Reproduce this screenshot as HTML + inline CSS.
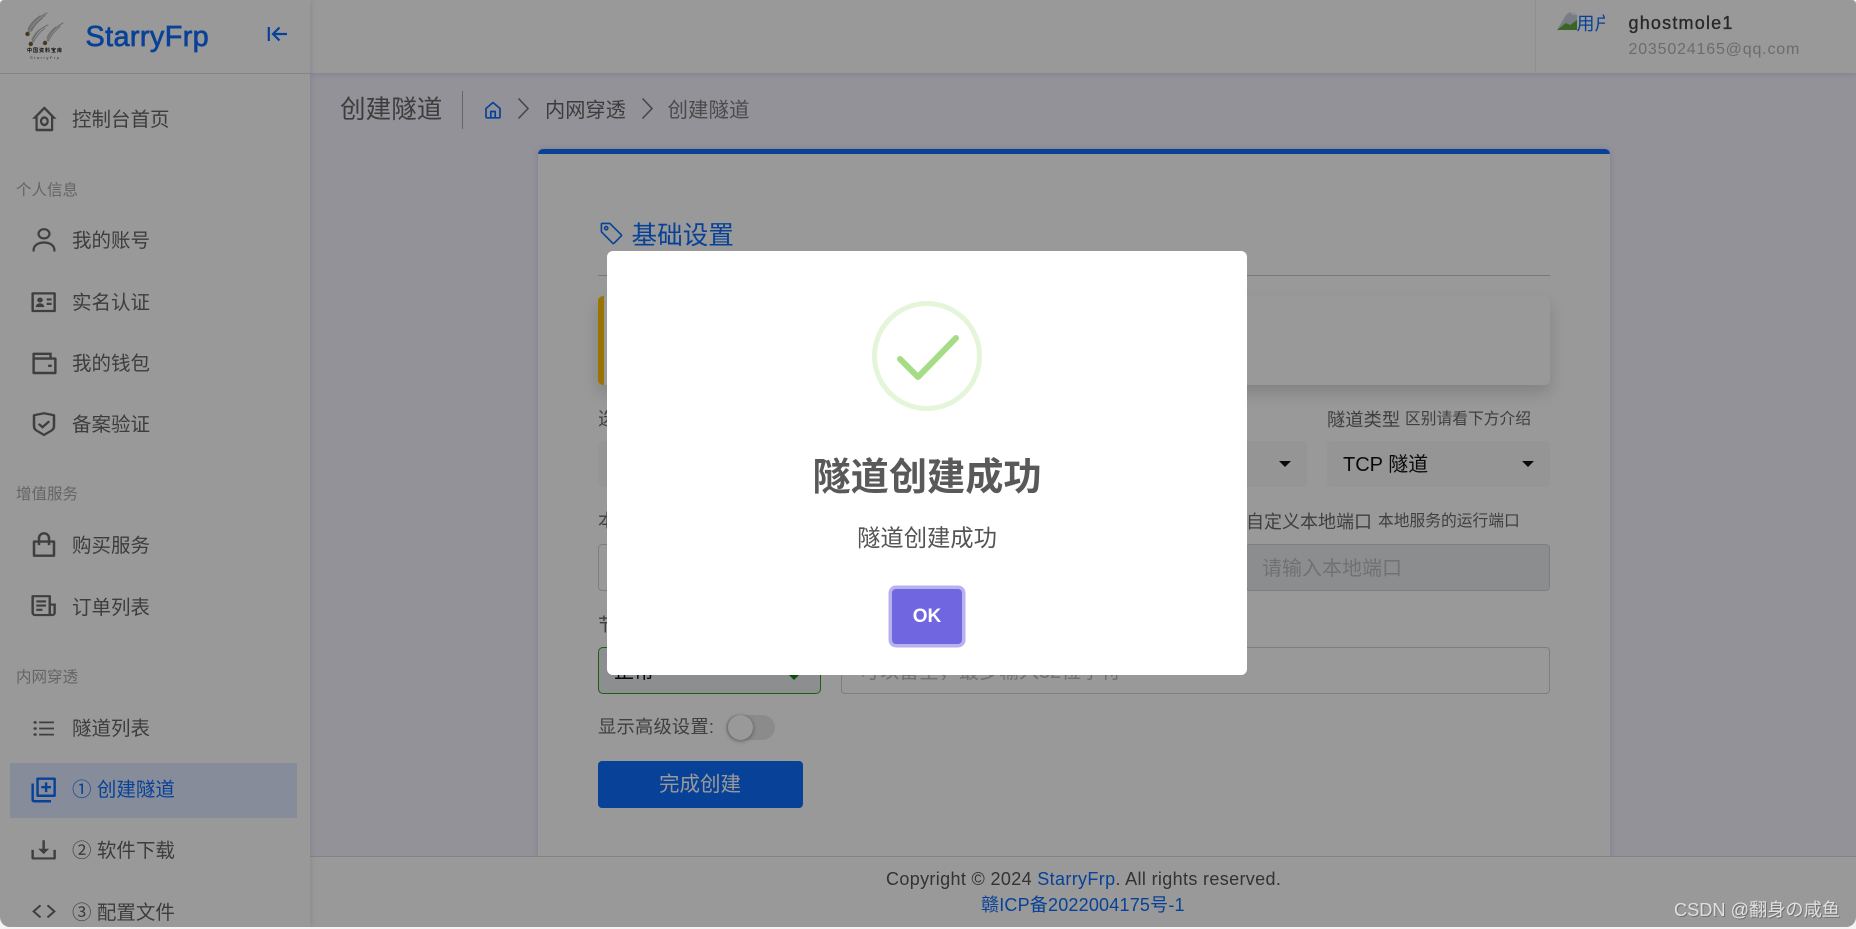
<!DOCTYPE html>
<html lang="zh">
<head>
<meta charset="utf-8">
<title>创建隧道</title>
<style>
*{box-sizing:border-box;margin:0;padding:0}
html,body{width:1856px;height:929px;overflow:hidden;background:#f4f4f4}
body{font-family:"Liberation Sans","Noto Sans CJK SC",sans-serif;position:relative}
#app{position:absolute;left:0;top:0;width:1856px;height:927px;overflow:hidden;background:#f5f3fd;border-radius:4px 4px 10px 10px}
.t{position:absolute;white-space:nowrap;line-height:1}
.b{position:absolute}
svg{position:absolute;display:block}
.m{font-size:19.5px;left:72px;color:#666}
.s{font-size:15.5px;left:16px;color:#a8a8a8}
.ic{fill:#6a6a6a}
.lab{font-size:18.3px;color:#6a6a6a}
.sub{font-size:15.75px;color:#6a6a6a}
#ov{position:absolute;left:0;top:0;width:1856px;height:927px;background:rgba(0,0,0,.4)}
</style>
</head>
<body>
<div id="app">
  <!-- main header -->
  <div class="b" style="left:310px;top:0;width:1546px;height:73px;background:#fff;box-shadow:0 1px 5px rgba(90,80,160,.18)"></div>
  <div class="b" style="left:1535px;top:0;width:1px;height:73px;background:#f0f0f0"></div>

  <!-- broken avatar -->
  <div class="b" style="left:1557px;top:12px;width:48px;height:48px;overflow:hidden">
    <svg style="left:0;top:0" width="20" height="18" viewBox="0 0 20 18"><path d="M9 3l4-3h4l3 3v15H0z" fill="#c8cfdc"/><path d="M0 18l9-7 4 2 7-5v10z" fill="#62a83c"/><path d="M13 0h4l3 3h-5z" fill="#eef0f4"/></svg>
    <div class="t" style="left:19.500px;top:2.500px;font-size:18px;color:#0d6efd">用户头像</div>
  </div>
  <div class="t" style="left:1628.5px;top:14px;font-size:18px;letter-spacing:1.2px;color:#444;-webkit-text-stroke:.35px #444">ghostmole1</div>
  <div class="t" style="left:1628.5px;top:42px;font-size:16px;letter-spacing:.82px;color:#b4b4b4">2035024165@qq.com</div>

  <!-- page title -->
  <div class="t" style="left:340px;top:98px;font-size:25.6px;color:#666">创建隧道</div>
  <div class="b" style="left:462px;top:91px;width:1px;height:38px;background:#aaa"></div>
  <svg style="left:483px;top:100px" width="20" height="20" viewBox="0 0 20 20" fill="none" stroke="#0d6efd" stroke-width="1.7" stroke-linejoin="round"><path d="M3 8.500L10 2.500l7 6V17a.8.8 0 0 1-.8.8H3.800A.8.8 0 0 1 3 17z"/><path d="M7.800 17.500v-6h4.400v6"/></svg>
  <svg style="left:516px;top:96px" width="14" height="25" viewBox="0 0 14 25" fill="none" stroke="#777" stroke-width="1.6"><path d="M2.500 2.500l9.500 10-9.500 10"/></svg>
  <div class="t" style="left:545px;top:100.500px;font-size:20.200px;color:#666">内网穿透</div>
  <svg style="left:639.500px;top:96px" width="14" height="25" viewBox="0 0 14 25" fill="none" stroke="#777" stroke-width="1.6"><path d="M2.500 2.500l9.500 10-9.500 10"/></svg>
  <div class="t" style="left:667.500px;top:101px;font-size:20.500px;color:#7d7d7d">创建隧道</div>

  <!-- card -->
  <div class="b" style="left:538px;top:149px;width:1072px;height:720px;background:#fff;border-top:5px solid #0d6efd;border-radius:5px 5px 0 0;box-shadow:0 0 6px rgba(90,80,160,.22)"></div>
  <svg style="left:599px;top:220.500px;fill:#0d6efd" width="25.600" height="25.600" viewBox="0 0 16 16"><path d="M6 4.500a1.500 1.500 0 1 1-3 0 1.500 1.500 0 0 1 3 0zm-1 0a.5.5 0 1 0-1 0 .5.5 0 0 0 1 0z"/><path d="M2 1h4.586a1 1 0 0 1 .707.293l7 7a1 1 0 0 1 0 1.414l-4.586 4.586a1 1 0 0 1-1.414 0l-7-7A1 1 0 0 1 1 6.586V2a1 1 0 0 1 1-1zm0 5.586 7 7L13.586 9l-7-7H2v4.586z"/></svg>
  <div class="t" style="left:631.500px;top:224px;font-size:25.600px;color:#0d6efd">基础设置</div>
  <div class="b" style="left:598px;top:275px;width:952px;height:1px;background:#c6c6c6"></div>

  <!-- alert -->
  <div class="b" style="left:598px;top:296px;width:952px;height:89px;background:#fff;border-left:6px solid #ffc107;border-radius:5px;box-shadow:0 8px 16px rgba(0,0,0,.15)"></div>

  <!-- row 1 -->
  <div class="t lab" style="left:598px;top:410px">选择服务器</div>
  <div class="b" style="left:598px;top:441px;width:223px;height:46px;background:#f8f9fa;border-radius:4px"></div>
  <div class="b" style="left:1084px;top:441px;width:223px;height:46px;background:#f8f9fa;border-radius:4px"></div>
  <div class="b" style="left:1279px;top:461px;width:0;height:0;border-left:6px solid transparent;border-right:6px solid transparent;border-top:6px solid #111"></div>
  <div class="t lab" style="left:1327px;top:411px">隧道类型</div>
  <div class="t sub" style="left:1405px;top:412px">区别请看下方介绍</div>
  <div class="b" style="left:1327px;top:441px;width:223px;height:46px;background:#f8f9fa;border-radius:4px"></div>
  <div class="t" style="left:1343px;top:454.500px;font-size:20px;color:#111">TCP 隧道</div>
  <div class="b" style="left:1522px;top:461px;width:0;height:0;border-left:6px solid transparent;border-right:6px solid transparent;border-top:6px solid #111"></div>

  <!-- row 2 -->
  <div class="t lab" style="left:598px;top:511.500px">本地地址</div>
  <div class="b" style="left:598px;top:544px;width:304px;height:47px;background:#fff;border:1px solid #ced4da;border-radius:4px"></div>
  <div class="t lab" style="left:1246px;top:512.500px;font-size:18px">自定义本地端口</div>
  <div class="t sub" style="left:1378px;top:514px">本地服务的运行端口</div>
  <div class="b" style="left:1246px;top:544px;width:304px;height:47px;background:#e9ecef;border:1px solid #ced4da;border-radius:4px"></div>
  <div class="t" style="left:1262px;top:559px;font-size:20px;color:#bcbcbc">请输入本地端口</div>

  <!-- row 3 -->
  <div class="t lab" style="left:598px;top:615.500px">节点</div>
  <div class="b" style="left:598px;top:647px;width:223px;height:47px;background:#ecedf0;border:1.500px solid #2f9e1f;border-radius:5px"></div>
  <div class="t" style="left:614px;top:662px;font-size:20px;color:#111">正常</div>
  <div class="b" style="left:787.500px;top:674px;width:0;height:0;border-left:6px solid transparent;border-right:6px solid transparent;border-top:6px solid #0a8a0a"></div>
  <div class="b" style="left:841px;top:647px;width:709px;height:47px;background:#fff;border:1px solid #ced4da;border-radius:4px"></div>
  <div class="t" style="left:859px;top:662px;font-size:20px;color:#bcbcbc">可以留空，最多输入32位字符</div>

  <!-- toggle -->
  <div class="t lab" style="left:598px;top:718px;letter-spacing:.2px">显示高级设置:</div>
  <div class="b" style="left:726px;top:715px;width:49px;height:25px;background:#e8e8e8;border-radius:13px"></div>
  <div class="b" style="left:727.500px;top:715px;width:25px;height:25px;background:#fff;border-radius:50%;box-shadow:0 1px 4px rgba(0,0,0,.4)"></div>

  <!-- button -->
  <div class="b" style="left:598px;top:761px;width:205px;height:47px;background:#0d6efd;border-radius:4px"></div>
  <div class="t" style="left:659px;top:774.500px;font-size:20.500px;color:#fff">完成创建</div>

  <!-- footer -->
  <div class="b" style="left:310px;top:856px;width:1546px;height:71px;background:#fff;border-top:1px solid #dcdcdc"></div>
  <div class="t" style="left:886px;top:870px;font-size:18px;letter-spacing:.35px;color:#555">Copyright © 2024 <span style="color:#0d6efd">StarryFrp</span>. All rights reserved.</div>
  <div class="t" style="left:981px;top:895.500px;font-size:18px;letter-spacing:.2px;color:#0d6efd">赣ICP备2022004175号-1</div>

  <!-- sidebar -->
  <div class="b" style="left:0;top:0;width:310px;height:927px;background:#fff;box-shadow:0 0 6px rgba(90,80,160,.2)"></div>
  <div class="b" style="left:0;top:73px;width:310px;height:1px;background:#dcdcdc"></div>

  <!-- logo -->
  <svg style="left:20px;top:5px" width="60" height="60" viewBox="0 0 60 60" fill="none">
    <g stroke="#b8b8b8" stroke-linecap="round" stroke-width="1.100">
      <path d="M8 27C12 18 18 12 27 8"/><path d="M9.500 27C13 20 18 15 25 10.500"/><path d="M8 24.500C10 19 14 15 20 11"/><path d="M11.500 26C14 21 17 17 22 13.500"/>
      <path d="M12 37C15 29 20 23 28 20"/><path d="M13.500 37C16 31 20 27 25 23"/><path d="M12 34.500C14 30 17 26 21 24"/>
      <path d="M27 36C30 29 34 23 43 18"/><path d="M28.500 36C31 30 35 26 40 21.500"/><path d="M27 33C29 28 32 25 36 22"/>
    </g>
    <g fill="#7d6030"><circle cx="7.500" cy="29" r="2.200"/><circle cx="10.800" cy="39" r="2.200"/><circle cx="25" cy="38" r="2.200"/></g>
    <text x="7" y="47" font-size="5" font-weight="700" fill="#111" textLength="35" font-family="Noto Sans CJK SC,sans-serif">中国资料宝库</text>
    <text x="10" y="54" font-size="4" fill="#555" textLength="29" font-family="Liberation Sans,sans-serif">StarryFrp</text>
  </svg>
  <div class="t" style="left:85.500px;top:22.500px;font-size:28.800px;letter-spacing:.4px;color:#0d6efd;-webkit-text-stroke:.7px #0d6efd">StarryFrp</div>
  <svg style="left:266px;top:25px" width="22" height="18" viewBox="0 0 22 18" fill="none" stroke="#0d6efd" stroke-width="2.200"><path d="M2.800 2v14"/><path d="M21 9H7.500M13.500 2.500L7 9l6.500 6.500"/></svg>

  <svg class="ic" style="left:30.500px;top:105px;width:26.700px;height:30px" preserveAspectRatio="none" viewBox="0 0 24 24"><path d="M20 20a1 1 0 0 1-1 1H5a1 1 0 0 1-1-1v-9H1l10.327-9.388a1 1 0 0 1 1.346 0L23 11h-3v9zM6 19h12V9.157l-6-5.454-6 5.454V19zm6-2a4 4 0 1 1 0-8 4 4 0 0 1 0 8zm0-2a2 2 0 1 0 0-4 2 2 0 0 0 0 4z"/></svg>
  <div class="t m" style="top:110.500px">控制台首页</div>
  <div class="t s" style="top:182.500px">个人信息</div>

  <svg style="left:32px;top:228px;fill:none;stroke:#6a6a6a;stroke-width:2.200" width="24" height="24" viewBox="0 0 24 24"><ellipse cx="12" cy="5.800" rx="5.500" ry="4.600"/><path d="M1.600 23.500v-1.500c0-4.500 4.500-7.500 10.400-7.500s10.400 3 10.400 7.500v1.500"/></svg>
  <div class="t m" style="top:232px">我的账号</div>

  <svg class="ic" style="left:29.400px;top:288.800px;width:29.300px;height:26.400px" preserveAspectRatio="none" viewBox="0 0 24 24"><path d="M2 3.993A1 1 0 0 1 2.992 3h18.016c.548 0 .992.445.992.993v16.014a1 1 0 0 1-.992.993H2.992A.993.993 0 0 1 2 20.007V3.993zM4 5v14h16V5H4z"/><circle cx="9" cy="10" r="2.300"/><path d="M5.500 16.500c0-2.200 1.600-3.500 3.500-3.500s3.500 1.300 3.500 3.500zM14.500 8.500h4v2h-4zM14.500 12.500h4v2h-4z"/></svg>
  <div class="t m" style="top:294px">实名认证</div>

  <svg class="ic" style="left:29.500px;top:348.600px;width:29px;height:28.800px" preserveAspectRatio="none" viewBox="0 0 24 24"><path d="M18 7h3a1 1 0 0 1 1 1v12a1 1 0 0 1-1 1H3a1 1 0 0 1-1-1V4a1 1 0 0 1 1-1h15v4zM4 9v10h16V9H4zm0-4v2h12V5H4zm11 8h3v2h-3v-2z"/></svg>
  <div class="t m" style="top:355px">我的钱包</div>

  <svg class="ic" style="left:29px;top:410.800px;width:30px;height:26.400px" preserveAspectRatio="none" viewBox="0 0 24 24"><path d="M3.783 2.826L12 1l8.217 1.826a1 1 0 0 1 .783.976v9.987a6 6 0 0 1-2.672 4.992L12 23l-6.328-4.219A6 6 0 0 1 3 13.790V3.802a1 1 0 0 1 .783-.976zM5 4.604v9.185a4 4 0 0 0 1.781 3.328L12 20.597l5.219-3.480A4 4 0 0 0 19 13.790V4.604L12 3.050 5 4.604z"/><path d="M7.800 11.700l3 3 5.400-5.400" fill="none" stroke="#6a6a6a" stroke-width="2"/></svg>
  <div class="t m" style="top:416px">备案验证</div>
  <div class="t s" style="top:487px">增值服务</div>

  <svg class="ic" style="left:29px;top:531.400px;width:30px;height:28.200px" preserveAspectRatio="none" viewBox="0 0 24 24"><path d="M7 8V6a5 5 0 1 1 10 0v2h3a1 1 0 0 1 1 1v12a1 1 0 0 1-1 1H4a1 1 0 0 1-1-1V9a1 1 0 0 1 1-1h3zm0 2H5v10h14V10h-2v2h-2v-2H9v2H7v-2zm2-2h6V6a3 3 0 0 0-6 0v2z"/></svg>
  <div class="t m" style="top:537px">购买服务</div>

  <svg class="ic" style="left:29.400px;top:593px;width:29.300px;height:25.200px" preserveAspectRatio="none" viewBox="0 0 24 24"><path d="M16 20V4H4v15a1 1 0 0 0 1 1h11zm3 2H5a3 3 0 0 1-3-3V3a1 1 0 0 1 1-1h14a1 1 0 0 1 1 1v7h4v9a3 3 0 0 1-3 3zm-1-10v7a1 1 0 0 0 2 0v-7h-2zM6 7h8v2H6zM6 11h8v2H6zM6 15h5v2H6z"/></svg>
  <div class="t m" style="top:599px">订单列表</div>
  <div class="t s" style="top:670px">内网穿透</div>

  <svg class="ic" style="left:30.300px;top:717.500px;width:27.400px;height:21px" preserveAspectRatio="none" viewBox="0 0 24 24"><path d="M8 4h13v2H8V4zM4.500 6.500a1.500 1.500 0 1 1 0-3 1.500 1.500 0 0 1 0 3zm0 7a1.500 1.500 0 1 1 0-3 1.500 1.500 0 0 1 0 3zm0 6.900a1.500 1.500 0 1 1 0-3 1.500 1.500 0 0 1 0 3zM8 11h13v2H8v-2zm0 7h13v2H8v-2z"/></svg>
  <div class="t m" style="top:720px">隧道列表</div>

  <div class="b" style="left:10px;top:763px;width:287px;height:55px;background:#e0e9ff"></div>
  <svg style="left:29.400px;top:775px;width:29.300px;height:29.300px;fill:#0d6efd" viewBox="0 0 24 24"><path d="M7 2h14a1 1 0 0 1 1 1v14a1 1 0 0 1-1 1H7a1 1 0 0 1-1-1V3a1 1 0 0 1 1-1zm1 2v12h12V4H8zM13 6h2v3h3v2h-3v3h-2v-3h-3V9h3zM2 7h2v13a.5.5 0 0 0 .5.5H18v2H4a2 2 0 0 1-2-2z"/></svg>
  <div class="t m" style="top:781px;color:#0d6efd">① 创建隧道</div>

  <svg class="ic" style="left:29.400px;top:837.200px;width:29.300px;height:25.700px" preserveAspectRatio="none" viewBox="0 0 24 24"><path d="M4 19h16v-7h2v8a1 1 0 0 1-1 1H3a1 1 0 0 1-1-1v-8h2v7z"/><path d="M11 3h2v8h3.500L12 16l-4.500-5H11z"/></svg>
  <div class="t m" style="top:842px">② 软件下载</div>

  <svg class="ic" style="left:31px;top:899.600px;width:26px;height:22.800px" preserveAspectRatio="none" viewBox="0 0 24 24"><path d="M23 12l-7.071 7.071-1.414-1.414L20.172 12l-5.657-5.657 1.414-1.414L23 12zM3.828 12l5.657 5.657-1.414 1.414L1 12l7.071-7.071 1.414 1.414L3.828 12z"/></svg>
  <div class="t m" style="top:904px">③ 配置文件</div>

  <div id="ov"></div>

  <!-- dialog -->
  <div class="b" style="left:607px;top:251px;width:640px;height:424px;background:#fff;border-radius:6px"></div>
  <svg style="left:872px;top:301px" width="110" height="110" viewBox="0 0 110 110" fill="none"><circle cx="55" cy="55" r="52.500" stroke="#e4f5da" stroke-width="5"/><path d="M28 58L46 76 84 37" stroke="#a5dc86" stroke-width="6" stroke-linecap="round" stroke-linejoin="round"/></svg>
  <div class="t" style="left:607px;width:640px;text-align:center;top:459px;font-size:38.200px;font-weight:700;color:#595959">隧道创建成功</div>
  <div class="t" style="left:607px;width:640px;text-align:center;top:526.500px;font-size:23.300px;color:#545454">隧道创建成功</div>
  <div class="b" style="left:892px;top:589px;width:70px;height:55px;background:#7066e0;border-radius:4px;box-shadow:0 0 0 3.500px #b7b2ef"></div>
  <div class="t" style="left:892px;width:70px;text-align:center;top:607px;font-size:19px;font-weight:700;color:#fff">OK</div>

  <!-- watermark -->
  <div class="t" style="left:1674px;top:901px;font-size:18.200px;color:#e0e0e0;text-shadow:1px 1px 0 rgba(60,60,60,.45)">CSDN @翻身の咸鱼</div>
</div>
</body>
</html>
